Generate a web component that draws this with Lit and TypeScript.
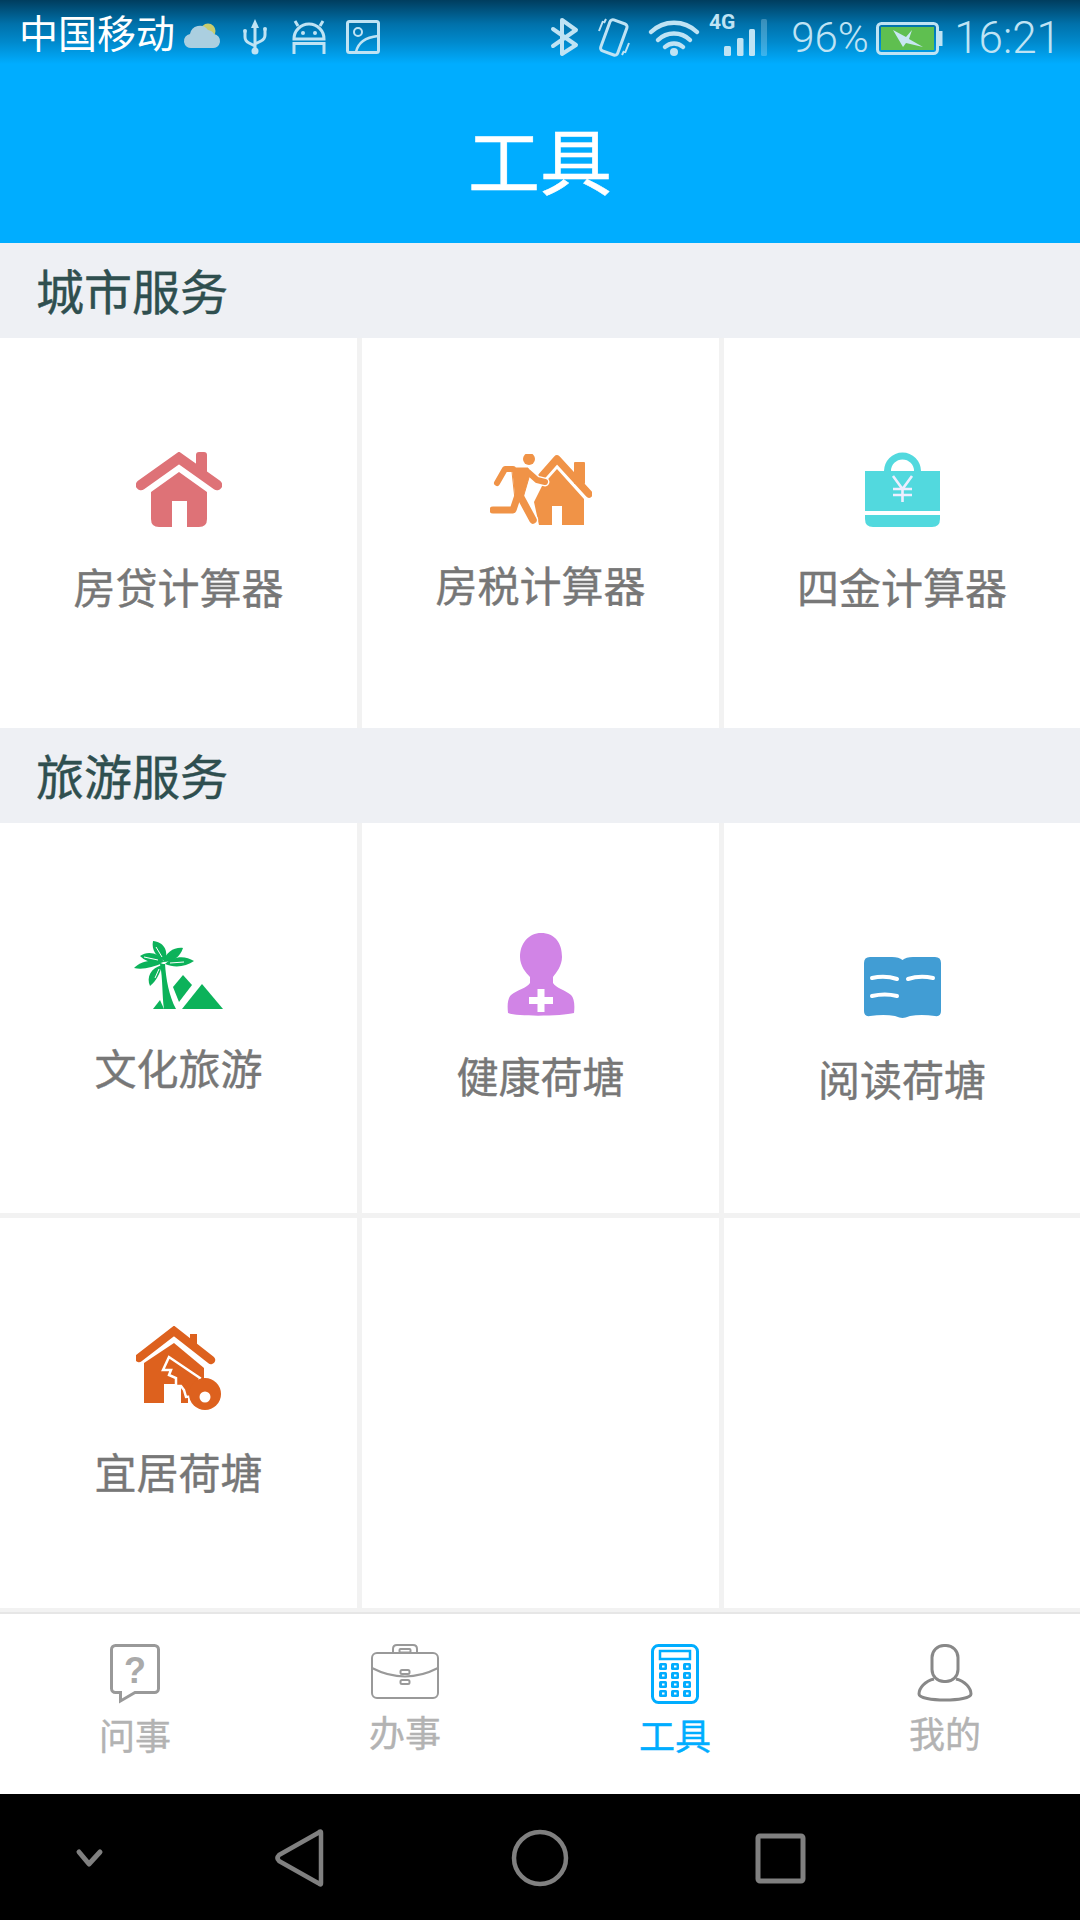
import { LitElement, html, svg, css } from "lit";
import { customElement } from "lit/decorators.js";

const homeIcon = svg`<path d="M5 33 43 6 81 33" fill="none" stroke="#de7277" stroke-width="10.5" stroke-linecap="round" stroke-linejoin="miter"/>
<path d="M60 3q0-3 3-3h5q3 0 3 3v20l-11-8z" fill="#de7277"/>
<path fill-rule="evenodd" d="M43 20 71 40V67q0 8-8 8H23q-8 0-8-8V40zM36 49V75H51V49z" fill="#de7277"/>`;

const runMan = (color: string, extra: number) => svg`<g fill="none" stroke=${color} stroke-linecap="round" stroke-linejoin="round">
<path d="M23 15 15 15 7 29" stroke-width=${6 + extra}/>
<path d="M29 38 23 56H3" stroke-width=${7 + extra}/>
<path d="M29 40 43 66" stroke-width=${7.5 + extra}/>
<path d="M38 18 47 26 55 28" stroke-width=${6 + extra}/>
<path d="M22 14H38L40 20 33 44 25 42z" fill=${color} stroke-width=${1 + extra}/>
</g>`;

const runHouseIcon = svg`<g fill="#f09347">
<path d="M52 22 67 5 99 40" fill="none" stroke="#f09347" stroke-width="7.500" stroke-linecap="round" stroke-linejoin="round"/>
<rect x="84" y="8" width="11" height="22" rx="1"/>
<path fill-rule="evenodd" d="M67 15 94 45V71H49L44 48 52 32zM62 52V71H72V52z"/>
<circle cx="39" cy="5" r="6"/></g>
${runMan("#fff", 3)}
${runMan("#f09347", 0)}`;

const bagIcon = svg`<path fill-rule="evenodd" d="M19 19a18.500 18.500 0 0 1 37 0zM26 19H49a11.500 11.500 0 0 0-23 0z" fill="#52d9de"/>
<path d="M0 19H75V59H0zM0 63H75V67q0 8-8 8H8q-8 0-8-8z" fill="#52d9de"/>
<path d="M28 24 37.500 37 47 24M37.500 37V50M28 37H47M28 43H47" fill="none" stroke="#eef" stroke-width="2.600"/>`;

const palmIcon = svg`<g fill="#0cb25a">
<path d="M26 23C29 38 28 55 30 68H42C35 55 32 38 31 23z"/>
<path d="M19 0C29 1 35 9 31 20 23 17 17 9 19 0z"/>
<path d="M49 7C40 6 32 11 29 21 39 21 46 16 49 7z"/>
<path d="M6 15C14 9 25 12 30 21 20 23 12 21 6 15z"/>
<path d="M60 20C51 14 39 15 31 23 40 27 52 26 60 20z"/>
<path d="M0 27C8 19 20 18 29 22 19 26 9 29 0 27z"/>
<path d="M16 45C12 36 17 27 28 24 26 33 22 40 16 45z"/>
<path d="M48 68 68 43 89 68z"/>
<path d="M39 46 49 34 58 44 45 61z"/>
<path d="M19 68 26 59 30 68z"/></g>
<path d="M22 6 28 16M10 16 24 19M50 21 36 22M21 37 25 28" stroke="#fff" stroke-width="1" fill="none"/>`;

const personIcon = svg`<path d="M34 0C48 0 55 10 55 24 55 33 49 40 46 44V50C49 55 58 57 64 62 67 65 68 71 67 80 56 83 12 84 1 80 0 71 1 65 4 62 10 57 20 55 23 50V44C19 40 13 33 13 24 13 10 22 0 34 0z" fill="#d184e6"/>
<path d="M22 64H30.500V56H37.500V64H46V71H37.500V79H30.500V71H22z" fill="#fff"/>`;

const bookIcon = svg`<path d="M6 0H28Q35 0 38.500 3 42 0 49 0H71Q77 0 77 6V54Q77 60 71 59 57 57 46 59 41 61 38.500 61 36 61 31 59 20 57 6 59 0 60 0 54V6Q0 0 6 0z" fill="#419dd4"/>
<path d="M8 21Q21 18 33 22M44 22Q56 18 69 21M8 39Q21 36 33 39" fill="none" stroke="#fff" stroke-width="4" stroke-linecap="round"/>`;

const keyHouseIcon = svg`<path d="M3 32 38 5 75 34" fill="none" stroke="#dd611e" stroke-width="8.500" stroke-linecap="round"/>
<rect x="54" y="8" width="7" height="14" fill="#dd611e"/>
<path d="M38 17 68 42V58H8V37z" fill="#dd611e"/>
<path d="M8 58H28V77H8z" fill="#dd611e"/><path d="M45 58H52V77H45z" fill="#dd611e"/>
<path d="M33 31 27 44H35L33 49 40 52V60H45L48 64 50 71 60 70 64 52z" fill="#dd611e" stroke="#fff" stroke-width="2.500"/>
<circle cx="69" cy="68" r="16" fill="#dd611e"/>
<circle cx="69" cy="71" r="5.500" fill="#fff"/>`;

const qIcon = html`<svg class="ic" width="50" height="60" viewBox="0 0 50 60">
<path d="M5.500 1.500h39a4 4 0 0 1 4 4v39a4 4 0 0 1-4 4H25L10.500 57V48.500h-5a4 4 0 0 1-4-4v-39a4 4 0 0 1 4-4z" fill="none" stroke="#999" stroke-width="3"/>
<text x="25" y="39" text-anchor="middle" font-size="36" font-weight="700" fill="#aaa" font-family="'Liberation Sans',sans-serif">?</text></svg>`;

const caseIcon = html`<svg class="ic" width="68" height="55" viewBox="0 0 68 55" fill="none" stroke="#999" stroke-width="2">
<rect x="1" y="9" width="66" height="45" rx="5"/>
<path d="M22 9V5q0-4 4-4h16q4 0 4 4v4"/>
<rect x="28.500" y="5" width="11" height="3.500" rx="1"/>
<path d="M1 24Q34 41 67 24"/>
<rect x="29.500" y="26" width="9" height="4" rx="1.500"/>
<rect x="29.500" y="36" width="9" height="4" rx="1.500"/></svg>`;

const keys = [8, 20, 32].flatMap((x) => [19, 28, 37, 46].map((y) => [x, y]));
const calcIcon = html`<svg class="ic" width="48" height="60" viewBox="0 0 48 60">
<rect x="1.500" y="1.500" width="45" height="57" rx="6" fill="none" stroke="#00adff" stroke-width="3"/>
<rect x="9" y="7" width="30" height="8" fill="none" stroke="#00adff" stroke-width="2.500"/>
${keys.map(([x, y]) => svg`<rect x=${x} y=${y} width="8" height="7" rx="1.500" fill="#00adff"/><rect x=${x + 3} y=${y + 2.5} width="2.500" height="2" fill="#fff"/>`)}
</svg>`;

const meIcon = html`<svg class="ic" width="56" height="58" viewBox="0 0 56 58" fill="none" stroke="#888" stroke-width="3">
<rect x="15" y="1.500" width="26" height="36" rx="12"/>
<path d="M17 35C8 37 2 44 2 50 2 54 15 56 28 56 41 56 54 54 54 50 54 44 48 37 39 35"/></svg>`;

const sections = [
  {
    title: "城市服务",
    cells: [
      { label: "房贷计算器", icon: homeIcon, w: 86, h: 75, top: 114, gap: 29 },
      { label: "房税计算器", icon: runHouseIcon, w: 102, h: 71, top: 116, gap: 29 },
      { label: "四金计算器", icon: bagIcon, w: 75, h: 75, top: 114, gap: 29 },
    ],
  },
  {
    title: "旅游服务",
    cells: [
      { label: "文化旅游", icon: palmIcon, w: 89, h: 68, top: 118, gap: 28 },
      { label: "健康荷塘", icon: personIcon, w: 68, h: 84, top: 110, gap: 28 },
      { label: "阅读荷塘", icon: bookIcon, w: 77, h: 61, top: 134, gap: 30 },
      { label: "宜居荷塘", icon: keyHouseIcon, w: 85, h: 84, top: 108, gap: 31 },
      null,
      null,
    ],
  },
];

const tabs = [
  { label: "问事", icon: qIcon, gap: 12, on: false },
  { label: "办事", icon: caseIcon, gap: 14, on: false },
  { label: "工具", icon: calcIcon, gap: 12, on: true },
  { label: "我的", icon: meIcon, gap: 12, on: false },
];

@customElement("app-root")
export class AppRoot extends LitElement {
  static styles = css`
    :host { display: block; width: 1080px; height: 1920px; font-family: "Noto Sans CJK SC", "Roboto", sans-serif; background: #f2f2f2; overflow: hidden; }
    .page { display: flex; flex-direction: column; height: 1920px; }
    .head { height: 243px; background: linear-gradient(#003d5e 0, #0071aa 24px, #0089cc 42px, #00adff 64px); flex: none; }
    .status { height: 62px; display: flex; align-items: center; color: #bfe3f4; }
    .carrier { color: #fff; font-size: 39px; line-height: 62px; margin-left: 19px; width: 161px; flex: none; white-space: nowrap; }
    .status svg { display: block; flex: none; }
    .right { margin-left: auto; display: flex; align-items: center; }
    .pct, .time { font-family: Roboto, sans-serif; font-weight: 300; font-size: 42px; line-height: 62px; white-space: nowrap; padding-top: 14px; }
    .pct { width: 83px; }
    .time { margin-left: 10px; margin-right: 19px; font-size: 44px; }
    .title { height: 181px; display: flex; align-items: center; justify-content: center; color: #fff; font-size: 72px; padding-top: 10px; box-sizing: border-box; -webkit-text-stroke: .5px #fff; }
    .sec { height: 95px; background: #eef0f4; color: #2f4f4f; font-size: 48px; line-height: 93px; padding-left: 36px; flex: none; -webkit-text-stroke: .4px #2f4f4f; }
    .grid { display: grid; grid-template-columns: 357px 357px 1fr; gap: 5px; grid-auto-rows: 390px; }
    .cell { background: #fff; display: flex; flex-direction: column; align-items: center; }
    .cell svg { display: block; flex: none; }
    .label { color: #777; font-size: 42px; line-height: 60px; white-space: nowrap; -webkit-text-stroke: .4px #777; }
    .spacer { flex: 1; }
    .tabs { height: 182px; flex: none; background: #fff; border-top: 2px solid #e6e6e6; box-sizing: border-box; display: grid; grid-template-columns: repeat(4, 270px); padding-top: 30px; }
    .tab { display: flex; flex-direction: column; align-items: center; }
    .ic { display: block; flex: none; }
    .tl { font-size: 36px; line-height: 36px; color: #b3b3b3; -webkit-text-stroke: .4px #b3b3b3; }
    .tab.on .tl { color: #00adff; -webkit-text-stroke-color: #00adff; }
    .nav { height: 126px; flex: none; background: #000; }
    .nav svg { display: block; }
  `;

  render() {
    return html`<div class="page">
      <div class="head">
        <div class="status">
          <div class="carrier">中国移动</div>
          <svg width="210" height="62" viewBox="180 0 210 62" fill="none">
            <circle cx="208" cy="31" r="7.500" fill="#c8cc6e"/>
            <path d="M192 48a7 7 0 0 1-2-14 10 10 0 0 1 18-4 8 8 0 0 1 6 4 7 7 0 0 1-2 14z" fill="#abcfe0"/>
            <g stroke="#bfe3f4" stroke-width="3">
              <path d="M255 26V50M245 32V37Q245 41 249 43L255 46M265 30V35Q265 39 261 41L255 44"/>
            </g>
            <path d="M255 19 251 28H259z" fill="#bfe3f4"/>
            <circle cx="255" cy="51" r="3.500" fill="#bfe3f4"/>
            <rect x="243" y="29" width="4" height="4" rx="2" fill="#bfe3f4"/><rect x="263" y="27" width="4" height="4" rx="2" fill="#bfe3f4"/>
            <g stroke="#bfe3f4" stroke-width="3">
              <path d="M294 39A15 15 0 0 1 324 39zM298 26 295 21M320 26 323 21M294 54V43.500H324V54"/>
            </g>
            <circle cx="303" cy="33" r="2" fill="#bfe3f4"/><circle cx="315" cy="33" r="2" fill="#bfe3f4"/>
            <g stroke="#bfe3f4">
              <rect x="347.500" y="21.500" width="31" height="31" rx="2" stroke-width="3"/>
              <circle cx="358" cy="32" r="4" stroke-width="2"/>
              <path d="M356 52Q359 38 378 36" stroke-width="2.500"/>
            </g>
          </svg>
          <div class="right">
            <svg width="245" height="62" viewBox="545 0 245 62" fill="none">
              <path d="M552 29 575 45 561 54V20L575 30 552 46" stroke="#bfe3f4" stroke-width="4" stroke-linecap="round" stroke-linejoin="round"/>
              <g stroke="#bfe3f4">
                <rect x="604" y="21" width="18" height="33" rx="3" stroke-width="3" transform="rotate(20 613 37)"/>
                <path d="M598 31 602 21M603 23 605 19M628 43 624 53M623 51 621 55" stroke-width="2"/>
              </g>
              <g stroke="#bfe3f4" stroke-width="4.500" stroke-linecap="round">
                <path d="M650 32A33 33 0 0 1 696 32"/>
                <path d="M657 40A23 23 0 0 1 689 40"/>
                <path d="M664 47A13 13 0 0 1 682 47"/>
              </g>
              <circle cx="673" cy="52" r="4" fill="#bfe3f4"/>
              <text x="708" y="29" font-size="21" font-weight="700" font-family="Roboto, sans-serif" fill="#bfe3f4">4G</text>
              <rect x="723" y="46" width="7" height="10" rx="1.500" fill="#bfe3f4"/>
              <rect x="736" y="38" width="6.500" height="18" rx="1.500" fill="#bfe3f4"/>
              <rect x="748" y="29" width="6" height="27" rx="1.500" fill="#bfe3f4"/>
              <rect x="760" y="19" width="6" height="37" rx="1.500" fill="#bfe3f4" opacity=".3"/>
            </svg>
            <div class="pct">96%</div>
            <svg width="70" height="62" viewBox="873 0 70 62" fill="none">
              <rect x="876.500" y="23.500" width="60" height="30" rx="4" stroke="#bfe3f4" stroke-width="3"/>
              <rect x="880" y="27" width="53" height="23" fill="#5fbf50"/>
              <rect x="938" y="31" width="3.500" height="15" fill="#bfe3f4"/>
              <path d="M892 30 905 37 911 30 908 39 922 47 905 43 902 47z" fill="#c8e6f2"/>
            </svg>
            <div class="time">16:21</div>
          </div>
        </div>
        <div class="title">工具</div>
      </div>
      ${sections.map(
        (s) => html`<div class="sec">${s.title}</div>
          <div class="grid">
            ${s.cells.map((c) =>
              c
                ? html`<div class="cell" style="padding-top:${c.top}px">
                    <svg width=${c.w} height=${c.h} viewBox="0 0 ${c.w} ${c.h}">${c.icon}</svg>
                    <div class="label" style="margin-top:${c.gap}px">${c.label}</div>
                  </div>`
                : html`<div class="cell"></div>`
            )}
          </div>`
      )}
      <div class="spacer"></div>
      <div class="tabs">
        ${tabs.map(
          (t) => html`<div class="tab ${t.on ? "on" : ""}">
            ${t.icon}
            <div class="tl" style="margin-top:${t.gap}px">${t.label}</div>
          </div>`
        )}
      </div>
      <div class="nav">
        <svg width="1080" height="126" viewBox="0 1794 1080 126" fill="none" stroke="#808080">
          <path d="M79 1852 89 1864 100 1852" stroke-width="5" stroke-linejoin="round" stroke-linecap="round"/>
          <path d="M321 1833V1883Q321 1886 318 1883L279 1861Q276 1858 279 1855L318 1833Q321 1830 321 1833z" stroke-width="4.500" stroke-linejoin="round"/>
          <circle cx="540" cy="1858" r="26" stroke-width="4.500"/>
          <rect x="758" y="1836" width="45" height="45" rx="2" stroke-width="5"/>
        </svg>
      </div>
    </div>`;
  }
}
